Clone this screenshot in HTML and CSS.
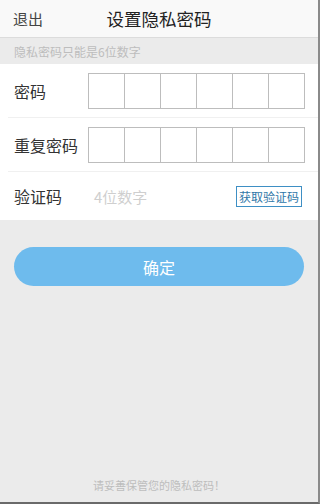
FILE: index.html
```html
<!DOCTYPE html>
<html lang="zh">
<head>
    <meta charset="UTF-8">
    <meta name="viewport" content="width=device-width, initial-scale=1.0">
    <title>设置隐私密码</title>
    <link rel="stylesheet" href="styles.css">
</head>
<body>
    <div class="page">
        <div class="header">
            <span class="back">退出</span>
            <span class="title">设置隐私密码</span>
        </div>
        <div class="hint">隐私密码只能是6位数字</div>

        <div class="form">
            <div class="row">
                <span class="label">密码</span>
                <div class="pin">
                    <span></span><span></span><span></span><span></span><span></span><span></span>
                </div>
            </div>
            <div class="row">
                <span class="label">重复密码</span>
                <div class="pin">
                    <span></span><span></span><span></span><span></span><span></span><span></span>
                </div>
            </div>
            <div class="row row-code">
                <span class="label">验证码</span>
                <span class="placeholder">4位数字</span>
                <span class="get-code">获取验证码</span>
            </div>
        </div>

        <div class="submit">确定</div>

        <div class="footer">请妥善保管您的隐私密码！</div>
    </div>
</body>
</html>
```

FILE: styles.css
```css
html, body {
    margin: 0;
    padding: 0;
}
body {
    font-family: "Noto Sans CJK SC", "Liberation Sans", sans-serif;
    background-color: #ebebeb;
    color: #333;
}
.page {
    height: 502px;
    width: 318px;
    display: flex;
    flex-direction: column;
    background-color: #ebebeb;
    border-right: 2px solid #8a8a8a;
    border-bottom: 2px solid #6a6a6a;
}
.header {
    height: 38px;
    background-color: #f9f9f9;
    border-bottom: 1px solid #dcdcdc;
    display: flex;
    align-items: center;
    position: relative;
    box-sizing: border-box;
}
.back {
    margin-left: 13px;
    font-size: 15px;
    color: #444;
}
.title {
    position: absolute;
    left: 0;
    right: 0;
    text-align: center;
    font-size: 17.5px;
    color: #222;
    pointer-events: none;
}
.hint {
    height: 26px;
    line-height: 28px;
    padding-left: 14px;
    font-size: 12px;
    color: #bdbdbd;
}
.form {
    background-color: #fff;
}
.row {
    height: 53px;
    display: flex;
    align-items: center;
    border-bottom: 1px solid #f0f0f0;
    margin-left: 8px;
    padding-right: 13px;
}
.row:last-child {
    border-bottom: none;
    height: 48px;
}
.label {
    width: 80px;
    padding-left: 6px;
    font-size: 16px;
    color: #333;
}
.pin {
    margin-left: auto;
    display: flex;
    border: 1px solid #bdbdbd;
    height: 34px;
}
.pin span {
    width: 35px;
    border-left: 1px solid #bdbdbd;
}
.pin span:first-child {
    border-left: none;
}
.placeholder {
    font-size: 15px;
    color: #cfcfcf;
}
.get-code {
    margin-left: auto;
    margin-right: 3px;
    border: 1px solid #3e8fc4;
    color: #2f77a8;
    font-size: 12px;
    padding: 1px 2px;
    line-height: 17px;
}
.submit {
    margin: 27px 14px 0 14px;
    height: 39px;
    border-radius: 20px;
    background-color: #6ebbed;
    color: #fff;
    font-size: 16px;
    display: flex;
    align-items: center;
    justify-content: center;
}
.footer {
    margin-top: auto;
    margin-bottom: 9px;
    text-align: center;
    font-size: 11px;
    color: #bdbdbd;
}
```
